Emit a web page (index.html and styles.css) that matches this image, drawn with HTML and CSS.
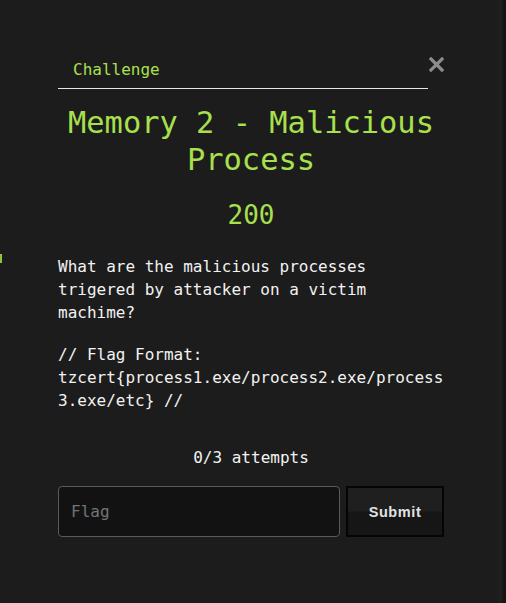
FILE: index.html
```html
<!DOCTYPE html>
<html>
<head>
<meta charset="utf-8">
<link rel="stylesheet" href="styles.css">
</head>
<body>
<div class="edge-mark"></div>
<div class="modal">
  <div class="top-row">
    <div class="header">Challenge</div>
    <button class="close" aria-label="Close">
      <svg width="15" height="15" viewBox="0 0 15 15"><path d="M2 2 L13 13 M13 2 L2 13" stroke="#8c8c8c" stroke-width="3.2" stroke-linecap="square"/></svg>
    </button>
  </div>
  <h1 class="title">Memory 2 - Malicious Process</h1>
  <div class="points">200</div>
  <p class="desc">What are the malicious processes trigered by attacker on a victim machime?</p>
  <p class="desc flag-format">// Flag Format:<br>tzcert{process1.exe/process2.exe/process3.exe/etc} //</p>
  <div class="attempts">0/3 attempts</div>
  <div class="form-row">
    <input class="flag-input" type="text" placeholder="Flag">
    <button class="submit">Submit</button>
  </div>
</div>
</body>
</html>
```

FILE: styles.css
```css
html, body {
  margin: 0;
  padding: 0;
}
body {
  width: 506px;
  height: 603px;
  overflow: hidden;
  background: linear-gradient(to right, #1c1c1c 0, #1c1c1c 499px, #232323 500px, #161616 503px, #121212 506px);
  font-family: "DejaVu Sans Mono", "Liberation Mono", monospace;
  color: #f0f0f0;
  position: relative;
}
.edge-mark {
  position: absolute;
  left: 0;
  top: 254px;
  width: 2px;
  height: 9px;
  background: #8fc43c;
}
.modal {
  margin: 57px 0 0 58px;
  width: 386px;
}
.top-row {
  display: flex;
  align-items: flex-start;
}
.header {
  width: 355px;
  padding: 3px 0 8px 15px;
  border-bottom: 1px solid #e6e6e6;
  color: #a8e04e;
  font-size: 16px;
  line-height: 20px;
}
.close {
  margin-left: 1px;
  width: 15px;
  height: 15px;
  padding: 0;
  border: 0;
  background: none;
  display: block;
}
.close svg { display: block; }
.title {
  margin: 15px -4px 0;
  text-align: center;
  font-weight: normal;
  font-size: 30.4px;
  line-height: 37px;
  color: #a8e04e;
}
.points {
  margin-top: 22px;
  text-align: center;
  font-size: 26px;
  line-height: 30px;
  color: #a8e04e;
}
.desc {
  margin: 25px 0 0;
  font-size: 16px;
  line-height: 23px;
  color: #f2f2f2;
}
.flag-format {
  margin-top: 19px;
  overflow-wrap: anywhere;
}
.attempts {
  margin-top: 34px;
  text-align: center;
  font-size: 16px;
  line-height: 23px;
  color: #f2f2f2;
}
.form-row {
  margin-top: 17px;
  display: flex;
  gap: 6px;
}
.flag-input {
  box-sizing: border-box;
  width: 282px;
  height: 51px;
  border: 1px solid #5a5a5a;
  border-radius: 4px;
  background: #121212;
  padding: 0 12px;
  font-family: "DejaVu Sans Mono", "Liberation Mono", monospace;
  font-size: 16px;
  color: #eee;
  outline: none;
}
.flag-input::placeholder {
  color: #6f757b;
}
.submit {
  box-sizing: border-box;
  width: 98px;
  height: 51px;
  border: 2px solid #050505;
  background: linear-gradient(to bottom, #1f1f1f 0, #1f1f1f 48%, #161616 52%, #161616 100%);
  color: #e2e2e2;
  font-family: "Liberation Sans", Arial, sans-serif;
  font-weight: bold;
  font-size: 14.5px;
  letter-spacing: 0.6px;
  padding: 0;
}
```
